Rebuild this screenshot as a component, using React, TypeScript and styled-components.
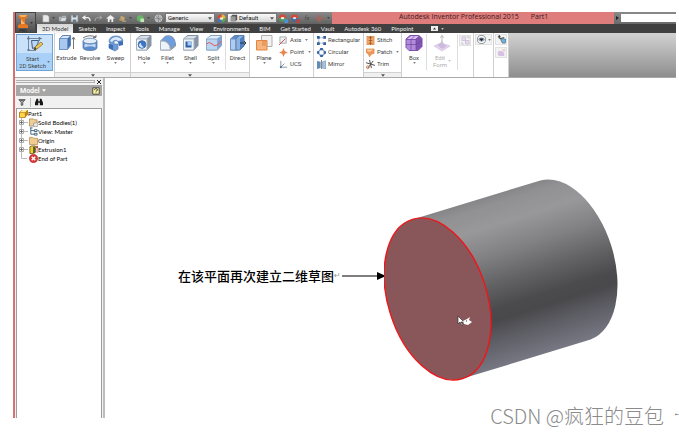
import React from "react";
import styled, { createGlobalStyle, css } from "styled-components";

const Global = createGlobalStyle`
  * { box-sizing: border-box; }
  body { margin: 0; background: #fff; font-family: Roboto, "Noto Sans", sans-serif; }
  button, select, input { font: inherit; color: inherit; border: 0; padding: 0; margin: 0; background: none; }
  svg { display: block; flex: none; }
`;

const Page = styled.div`
  position: relative;
  min-height: 100vh;
  padding: 12px 3px 17px 13px;
`;
const Shell = styled.div`
  display: flex;
  flex-direction: column;
  min-height: calc(100vh - 29px);
  border-left: 2px solid #d97373;
  font-size: 6px;
  line-height: 8px;
  color: #444;
`;
const Header = styled.header`
  display: flex;
  height: 21px;
`;
const AppButton = styled.button`
  width: 21px;
  flex: none;
  display: flex;
  align-items: center;
  justify-content: center;
  gap: 2px;
  background: linear-gradient(#8c8c8c, #4b4b4b);
  border: 1px solid #444;
`;
const HeaderRows = styled.div`
  flex: 1;
  min-width: 0;
`;
const TitleRow = styled.div`
  display: flex;
  height: 12px;
`;
const QuickBar = styled.div`
  width: 296px;
  flex: none;
  display: flex;
  align-items: center;
  padding: 0 1px 0 3px;
  background: linear-gradient(#8a8a8a, #626262);
`;
const QuickButton = styled.button<{ $w?: number }>`
  width: ${(p) => p.$w ?? 12}px;
  height: 11px;
  flex: none;
  display: flex;
  align-items: center;
  justify-content: center;
  gap: 2px;
`;
const Combo = styled.div`
  width: 50px;
  height: 10px;
  flex: none;
  display: flex;
  align-items: center;
  gap: 1px;
  padding: 0 2px;
  background: linear-gradient(#fafafa, #d6d6d6);
  border: 1px solid #777;
`;
const ComboSelect = styled.select`
  appearance: none;
  flex: 1;
  min-width: 0;
  height: 8px;
  line-height: 8px;
  color: #111;
`;
const Title = styled.h1`
  flex: 1;
  margin: 0;
  padding-left: 67px;
  display: flex;
  gap: 12px;
  background: #df7d7d;
  color: #3a1c1c;
  font: 400 7px/9px "Open Sans", sans-serif;
  white-space: nowrap;
`;
const SearchArea = styled.div`
  width: 62px;
  flex: none;
  display: flex;
  align-items: center;
  justify-content: space-between;
  padding-left: 2px;
  background: linear-gradient(#8a8a8a, #6a6a6a);
`;
const SearchInput = styled.input`
  width: 55px;
  height: 8px;
  background: #fff;
`;
const Tabs = styled.nav`
  display: flex;
  height: 9px;
  padding-left: 1px;
  background: #404040;
  font-family: Lato, sans-serif;
`;
const Tab = styled.button<{ $active?: boolean }>`
  height: 9px;
  line-height: 9px;
  padding: 0 5px;
  color: #f0f0f0;
  white-space: nowrap;
  ${(p) =>
    p.$active &&
    css`
      background: linear-gradient(#d4d4d4, #f4f4f4);
      color: #333;
    `}
`;
const TabMenu = styled(Tab)`
  display: flex;
  align-items: center;
  gap: 3px;
  margin-left: 8px;
`;

const Ribbon = styled.div`
  display: flex;
  height: 45px;
  border-bottom: 1px solid #a8a8a8;
  background: linear-gradient(#d2d2d2, #8e8e8e);
`;
const Panel = styled.section<{ $w: number }>`
  width: ${(p) => p.$w}px;
  flex: none;
  display: flex;
  flex-direction: column;
  background: #fff;
  border-right: 1px solid #cfcfcf;
`;
const PanelBody = styled.div<{ $pad?: number }>`
  flex: 1;
  display: flex;
  padding: 1px ${(p) => p.$pad ?? 0}px 0;
`;
const PanelFoot = styled.button`
  height: 5px;
  width: 100%;
  flex: none;
  display: flex;
  align-items: center;
  justify-content: center;
  background: #f0f0f0;
  border-top: 1px solid #d2d2d2;
`;
const StartButton = styled.button`
  width: 37px;
  height: 37px;
  margin-left: 1px;
  display: grid;
  grid-template-rows: 19px 1fr;
  justify-items: center;
  line-height: 7px;
  background: linear-gradient(#c9e2fa 52%, #a9d1f7 52%);
  border: 1px solid #6fa3d6;
`;
const StartLabel = styled.span`
  display: flex;
  align-items: center;
  gap: 1px;
`;
const Tool = styled.button<{ $w: number; $faded?: boolean }>`
  width: ${(p) => p.$w}px;
  flex: none;
  display: flex;
  flex-direction: column;
  align-items: center;
  line-height: 7px;
  opacity: ${(p) => (p.$faded ? 0.45 : 1)};
  white-space: nowrap;
`;
const ToolLabel = styled.span`
  margin: 2px 0 1px;
`;
const Rule = styled.i`
  width: 1px;
  flex: none;
  height: 36px;
  background: #dedede;
`;
const RowList = styled.div<{ $left?: number }>`
  display: flex;
  flex-direction: column;
  padding: 0 0 0 ${(p) => p.$left ?? 3}px;
`;
const RowTool = styled.button`
  height: 12px;
  display: flex;
  align-items: center;
  gap: 2px;
  white-space: nowrap;
`;
const RowText = styled.span`
  margin-right: 2px;
`;
const MiniButton = styled.button<{ $faded?: boolean }>`
  height: 11px;
  min-width: 12px;
  display: flex;
  align-items: center;
  justify-content: center;
  gap: 2px;
  margin: 1px;
  background: #f3f3f3;
  border: 1px solid #e2e2e2;
  svg { opacity: ${(p) => (p.$faded ? 0.4 : 1)}; }
`;

const Work = styled.div`
  flex: 1;
  display: flex;
`;
const Browser = styled.aside`
  width: 90px;
  flex: none;
  display: flex;
  flex-direction: column;
  padding-left: 1px;
  background: #f1f1f1;
  border-right: 2px solid #bdbdbd;
`;
const Grip = styled.div`
  height: 7px;
  display: flex;
  align-items: center;
  gap: 2px;
  padding-right: 2px;
`;
const GripLines = styled.i`
  flex: 1;
  height: 3px;
  border: solid #b0b0b0;
  border-width: 1px 1px 1px 0;
`;
const PlainButton = styled.button`
  display: flex;
  align-items: center;
  gap: 2px;
`;
const BrowserTitle = styled.div`
  height: 11px;
  display: flex;
  align-items: center;
  justify-content: space-between;
  margin-right: 1px;
  padding: 0 2px 0 4px;
  background: #a6a6a6;
  color: #fff;
  font-size: 7px;
  font-weight: 600;
`;
const BrowserTools = styled.div`
  height: 12px;
  display: flex;
  align-items: center;
  gap: 4px;
  padding-left: 2px;
`;
const ToolRule = styled.i`
  width: 1px;
  height: 9px;
  background: #bbb;
`;
const Tree = styled.ul`
  flex: 1;
  list-style: none;
  margin: 0 1px 0 0;
  padding: 0 0 0 2px;
  background: #fff;
  border: solid #9c9c9c;
  border-width: 1px 1px 0 1px;
  color: #000;
  font-family: Lato, sans-serif;
`;
const Node = styled.li`
  height: 9px;
  display: flex;
  align-items: center;
  white-space: nowrap;
`;

const Viewport = styled.main`
  flex: 1;
  min-width: 0;
  display: flex;
  align-items: flex-start;
  padding: 100px 0 0 73px;
  background: #fff;
`;
const Callout = styled.div`
  display: flex;
  align-items: center;
  flex: none;
  margin: 88px -2px 0 0;
  height: 20px;
  color: #000;
  font: 500 13px/20px "Noto Sans CJK SC", sans-serif;
  white-space: nowrap;
`;
const Return = styled.span`
  width: 8px;
  color: #999;
  font: 8px/20px "DejaVu Sans", sans-serif;
`;
const Watermark = styled.div`
  position: absolute;
  right: 15px;
  bottom: 5px;
  color: #8b8b8b;
  font: 300 20px/28px "Noto Sans CJK SC", sans-serif;
  white-space: nowrap;
`;
const PageReturn = styled.span`
  position: absolute;
  right: 0;
  bottom: 15px;
  color: #555;
  font: 5px/12px "DejaVu Sans", sans-serif;
`;

const Caret = ({ color = "#555", size = 3 }: { color?: string; size?: number }) => (
  <svg width={size} height={size - 1} viewBox="0 0 4 3" aria-hidden="true">
    <path d="M0 0.3H4L2 2.8Z" fill={color} />
  </svg>
);

const B = "#3f6fae";
const L = "#a9c8ef";
const G = "#66717f";

const big: Record<string, React.ReactNode> = {
  sketch: (
    <>
      <path d="M2.5 1v15M1 3.5h15M2 15.5h8M13.5 2v4" stroke="#5d7287" strokeWidth=".8" fill="none" />
      <path d="M1.500 2.500h2v2h-2zM12.500 2.500h2v2h-2zM1.500 14h2v2h-2z" fill="#5f7890" />
      <path d="M5.5 5.5h7q-1 7-6 8z" fill="#b9d8f7" stroke="#3f5d82" />
      <path d="M8 15l1-3 6-5 2 2-6 5z" fill="#f0ca55" stroke="#855f21" strokeWidth=".7" />
      <path d="M8 15l1-3 1.6 2z" fill="#403526" />
    </>
  ),
  extrude: (
    <>
      <path d="M1.5 4.5l3-3h8v10l-3 4h-8z" fill={B} stroke="#6384ae" />
      <path d="M1.5 4.5h8v11h-8z" fill={L} stroke="#6f94c4" />
      <path d="M2 4l3-2h7l-2 2z" fill="#d9e9fb" />
      <path d="M15.500 15V4M14 5.500L15.500 3 17 5.500" stroke="#666" fill="none" strokeWidth=".9" />
    </>
  ),
  revolve: (
    <>
      <path d="M2 7v6.500q0 3 7 3t7-3V7z" fill="#5c8bc9" stroke="#557bad" strokeWidth=".8" />
      <path d="M3.500 9.500q5.500 2 11 0v4q-5-2.500-11 0z" fill="#c3daf6" />
      <ellipse cx="9" cy="7" rx="7" ry="2.800" fill="#e2edfa" stroke="#557bad" strokeWidth=".8" />
      <path d="M2 4q6-4 13-1M15 1v2.500h-3" stroke="#666" fill="none" strokeWidth=".9" />
    </>
  ),
  sweep: (
    <>
      <path d="M2 8q0-6 7-6 6 0 7 5l-5 1q-1-2-4-1v3h4v5l-3 2-6-3v-4h2z" fill="#6d9bd7" stroke="#5f86b8" strokeWidth=".8" />
      <path d="M3 7q2-4 7-4 4 1 5 3l-4 1q-3-3-6 1z" fill="#dceafb" />
      <path d="M2 10l4 1v5l-4-2zM11 8l5-1v4l-4 1z" fill="#3c6fb3" />
    </>
  ),
  hole: (
    <>
      <path d="M1.5 5l4-3.5H16v10l-4 4.5H1.5z" fill="#8795a4" stroke="#8896a6" />
      <path d="M1.5 5H12v11H1.5z" fill="#edf3f8" stroke="#a4b0bd" />
      <path d="M2 4.5L6 2h9l-3 2.5z" fill="#d7e0e9" />
      <circle cx="7" cy="10.5" r="3.800" fill="#3976ca" stroke="#4a6ea3" />
      <path d="M4 11a3 3 0 0 0 5 2q-3-1-3-4-2 0-2 2z" fill="#d3e8ff" />
    </>
  ),
  fillet: (
    <>
      <path d="M1.5 7l5-5q9-2 10 8v2l-5 4h-10z" fill="#8b9bac" stroke="#8594a5" />
      <path d="M1.5 7q9-1 10 9h-10z" fill="#edf3f8" stroke="#a4b0bd" />
      <path d="M3 6l4-4q8-1 9.500 8l-4.500 4Q11 7 3 6z" fill="#6f9ee0" />
    </>
  ),
  shell: (
    <>
      <path d="M1.5 5l4-3.5H16v10l-4 4.5H1.5z" fill="#8795a4" stroke="#8290a0" />
      <path d="M1.5 5H12v11H1.5z" fill="#edf3f8" stroke="#a4b0bd" />
      <path d="M3.500 7.500h6v6h-6z" fill="#2e5f9f" />
      <path d="M5.500 7.500h4v4h-4z" fill="#a6caf4" />
      <path d="M2 4.5L6 2h9l-3 2.5z" fill="#d7e0e9" />
    </>
  ),
  split: (
    <>
      <path d="M1.5 5l4-3.5h11v10l-4 4.5h-11z" fill="#7da5d7" stroke="#86a1c0" />
      <path d="M1.5 5h11v11h-11z" fill="#bad4f1" stroke="#8dacc9" />
      <path d="M2 4.5L6 2h10l-4 2.5z" fill="#e4eff9" />
      <path d="M1.500 10q3-3 5.500 0t5.500 1l4-4" stroke="#e35656" fill="none" />
    </>
  ),
  direct: (
    <>
      <path d="M1.5 5l4-3.5H13v10l-4 4.5H1.5z" fill="#5d8bc7" stroke="#5f80a8" />
      <path d="M1.5 5H7v11H1.5z" fill="#afcdf1" stroke="#6e94c3" />
      <path d="M7 5l3.5-3.5H15V12l-4 4H7z" fill="#8db1e0" stroke="#5f80a8" />
      <path d="M11 5l4-3.500V12l-4 4z" fill="#4f7fbd" />
      <path d="M11 9h6M15 7l2 2-2 2" stroke="#26374d" fill="none" />
    </>
  ),
  plane: (
    <>
      <path d="M6.5 1.5H17v11H6.5z" fill="#f2f2f2" stroke="#b0b0b0" />
      <path d="M1.5 6.5H12v9.5H1.5z" fill="#f8b47e" stroke="#e08643" />
      <path d="M7 7h4.500v5H7z" fill="#e89c60" />
    </>
  ),
  box: (
    <>
      <path d="M1 5l4-3.500h9l3 3v8l-4 4H4l-3-3z" fill="#8055b2" stroke="#7d52ad" strokeLinejoin="round" />
      <path d="M1.500 6h9.500v10H4l-2.500-2z" fill="#b48bdc" />
      <path d="M2 5l4-3h8l-3 3z" fill="#d9bdf2" />
      <path d="M1 10.500h10l6-4M6 16V5.500l4-4M11 16V5l4-3" stroke="#6d4699" fill="none" strokeWidth=".7" />
    </>
  ),
  form: (
    <>
      <path d="M1 12l7-3 9 3-8 5z" fill="#c5a1df" stroke="#9c76bd" strokeWidth=".7" />
      <path d="M4 11q4-1 5-5 1 5 5 6l-5 3z" fill="#8f6ab3" />
      <path d="M9 8V2M7.500 4L9 1l1.500 3" stroke="#777" fill="none" />
    </>
  ),
};

const small: Record<string, React.ReactNode> = {
  axis: <><path d="M1 1h7v7H1z" fill="#edf0f3" stroke="#8c959d" strokeWidth=".8" /><path d="M0 10l7-7" stroke="#d0452e" /></>,
  point: <path d="M5 0l1.5 3.5L10 5 6.500 6.500 5 10 3.500 6.500 0 5l3.500-1.500z" fill="#e9854a" />,
  ucs: <><path d="M2 1v7h7M2 8l4-4" fill="none" stroke={G} strokeWidth=".8" /><path d="M1 7h2v2H1z" fill="#3976a8" /></>,
  rect: <><path d="M2 2h7M2 2v6h7" stroke="#7590b2" fill="none" strokeDasharray="2 1" /><path d="M0 0h3v3H0zM7 0h3v3H7zM0 7h3v3H0zM7 7h3v3H7z" fill="#315f9d" /></>,
  circ: <><circle cx="5" cy="5" r="3.300" stroke="#7c9aca" strokeWidth="1.300" fill="none" /><path d="M3.500 0h3v2.500h-3zM3.500 7.500h3V10h-3zM0 3.500h2.500v3H0zM7.500 3.500H10v3H7.500z" fill="#355f9e" /></>,
  mirror: <><path d="M0 1l4 1v7L0 10z" fill="#648bb8" /><path d="M10 1L6 2v7l4 1z" fill="#a5c2df" stroke="#6b8bad" strokeWidth=".6" /><path d="M5 0v10" stroke="#444" strokeWidth=".7" /></>,
  stitch: <><path d="M1 0h8v10H1z" fill="#f3a868" stroke="#cd7b40" strokeWidth=".6" /><path d="M5 0v10M3 2h4M3 5h4M3 8h4" stroke="#8f4e25" strokeWidth=".8" /></>,
  patch: <><path d="M0 1h9v5q-4 0-5 4Q3 6 0 5z" fill="#ef9658" stroke="#d3803f" strokeWidth=".6" /><path d="M1 2h7L5 4H2z" fill="#ffd4ac" /></>,
  trim: <><path d="M0 3l10 3M4 0l2 9M8 1L2 9" stroke="#4d4d4d" strokeWidth="1.100" /><circle cx="2" cy="8" r="1.500" stroke="#cc7440" fill="none" /></>,
  convert: <><path d="M1 1h4v4H1zM5 5h4v4H5z" fill="#d7b6e9" stroke="#9b79b1" /><path d="M6 1h3v2M1 7v2h2" stroke="#777" fill="none" /></>,
  eye: <><circle cx="5" cy="5" r="4.500" fill="#fff" stroke="#555" strokeWidth=".7" /><path d="M1 5q4-5 8 0-4 5-8 0z" fill="#9aa9b5" /><path d="M2.500 4h5L5 7z" fill="#223" /></>,
  inspect: <><path d="M1 2h3M2.500 0v4M3 4l5-1" stroke="#222" /><path d="M4 5l3-1 3 1-1 4H6z" fill="#75b3d5" stroke="#335d7b" strokeWidth=".7" /></>,
  form2: <><path d="M1 4l3-1 4 2v4H3L1 8z" fill="#ab7acc" /><path d="M6 1l3 3M9 1L6 4" stroke="#e26b5e" /></>,
  newdoc: <path d="M2 1h5l2 2v6H2z" fill="#e9e9e9" stroke="#999" strokeWidth=".6" />,
  open: <><path d="M1 3h3l1-1h4v6H1z" fill="#b0b5b9" /><path d="M2 8l2-4h6L8 8z" fill="#dde1e4" stroke="#6a7075" strokeWidth=".5" /></>,
  save: <><path d="M1 1h8v8H1z" fill="#dfe6ed" stroke="#6e7882" /><path d="M3 1h4v3H3zM3 6h4v3H3z" fill="#6c7781" /></>,
  undo: <path d="M4 2L1 4l3 2M1 4h5q3 0 3 4" fill="none" stroke="#efefef" strokeWidth="1.300" />,
  redo: <path d="M6 2l3 2-3 2M9 4H4Q1 4 1 8" fill="none" stroke="#aaa" />,
  home: <path d="M0 5l5-4 5 4H8v4H6V6H4v3H2V5z" fill="#efefef" />,
  team: <><path d="M1 7l3-5 4 2-2 4z" fill="#b99b68" /><path d="M5 8h4M3 3l4 3" stroke="#d2bb85" /></>,
  update: <><path d="M1 3l3-2 4 1v5L5 9 1 7z" fill="#66b566" /><path d="M5 5h4v4H5z" fill="#c3e7b4" /></>,
  globe: <><circle cx="5" cy="5" r="4" fill="#b4b8ba" stroke="#ddd" strokeWidth=".6" /><path d="M1 5h8M5 1v8M2 2l6 6" stroke="#777" strokeWidth=".6" /></>,
  wheel: <><path d="M5 5V.5A4.500 4.500 0 0 1 9.500 5z" fill="#e8b738" /><path d="M5 5h4.500A4.500 4.500 0 0 1 5 9.500z" fill="#57a94d" /><path d="M5 5v4.500A4.500 4.500 0 0 1 .5 5z" fill="#4872cc" /><path d="M5 5H.5A4.500 4.500 0 0 1 5 .5z" fill="#d7473a" /><ellipse cx="5" cy="5" rx="2" ry="1.500" fill="#f2edcc" /></>,
  adjust: <><path d="M0 4.500a4 4 0 0 1 8 0z" fill="#d7473a" /><path d="M0 4.500a4 4 0 0 0 8 0z" fill="#4f9c58" /><ellipse cx="4" cy="4.500" rx="2" ry="1.300" fill="#eee" /><path d="M6 6h4v4H6z" fill="#4b93d6" /></>,
  clear: <><path d="M0 4.500a4 4 0 0 1 8 0z" fill="#d7473a" /><path d="M0 4.500a4 4 0 0 0 8 0z" fill="#46699f" /><ellipse cx="4" cy="4.500" rx="2" ry="1.300" fill="#ddd" /><path d="M6 6l4 4M10 6l-4 4" stroke="#d93b33" strokeWidth="1.300" /></>,
  plus: <path d="M5 1v8M1 5h8" stroke="#a86458" strokeWidth="2" />,
  cube: <><path d="M1 3l2-2h6v6L7 9H1z" fill="#555" /><path d="M1 3h6v6H1z" fill="#999" /></>,
  part: <><path d="M0 4l3-3h7v5L7 9.500H0z" fill="#c48715" /><path d="M.5 4H7v5.500H.5z" fill="#ffd64c" stroke="#94620c" strokeWidth=".6" /><path d="M1 3.500L4 1h5L7 3.500z" fill="#fff09e" /></>,
  bodies: <><path d="M.5 1H5l1 1h3v7H.5z" fill="#f0cf95" stroke="#92713b" strokeWidth=".7" /><path d="M5 6l3-1 2 1v3L7 10 5 9z" fill="#e2e7ea" stroke="#777" strokeWidth=".6" /></>,
  view: <path d="M2 1v7h4M2 4h4M1 1h3M6 3h3v2H6zM6 7h3v2H6z" stroke="#345d7e" fill="none" />,
  folder: <path d="M.5 1.500H4l1 1h4.500v7H.5z" fill="#f1cc91" stroke="#ad7c3d" strokeWidth=".7" />,
  extr: <><path d="M1 2l2-1h4v7L5 9.500H1z" fill="#f3d02f" stroke="#56420b" strokeWidth=".8" /><path d="M4.500 2H7v7H4.500z" fill="#555f29" /><path d="M9 9V1M8 3l1-2 1 2" stroke="#c33" strokeWidth=".8" /></>,
  end: <><circle cx="5" cy="5" r="4.700" fill="#d93636" stroke="#a42020" strokeWidth=".5" /><path d="M3 3l4 4M7 3L3 7" stroke="#fff" strokeWidth="1.500" /></>,
  filter: <path d="M1 2h8L6 5.500V9H4V5.500zM3 3h4" fill="#aaa" stroke="#3d3d3d" strokeWidth=".9" />,
  find: <path d="M2 1h2v3h2V1h2l2 5v3H6V6H4v3H0V6z" fill="#171717" />,
  help: <><path d="M1 1h8v8H1z" fill="#fff9a4" stroke="#333" /><path d="M3 4q0-2 2-2t2 2L5 5v1M5 7v1" stroke="#333" fill="none" /></>,
};

const Big = ({ n }: { n: string }) => (
  <svg width="18" height="18" viewBox="0 0 18 18" aria-hidden="true">{big[n]}</svg>
);
const Small = ({ n, s = 9 }: { n: string; s?: number }) => (
  <svg width={s} height={s} viewBox="0 0 10 10" aria-hidden="true">{small[n]}</svg>
);

const BigTool = ({ n, w, label, menu }: { n: string; w: number; label: string; menu?: boolean }) => (
  <Tool $w={w}>
    <Big n={n} />
    <ToolLabel>{label}</ToolLabel>
    {menu && <Caret />}
  </Tool>
);

const ListTool = ({ n, label, menu }: { n: string; label: string; menu?: boolean }) => (
  <RowTool>
    <Small n={n} />
    <RowText>{label}</RowText>
    {menu && <Caret />}
  </RowTool>
);

const tabs = ["3D Model", "Sketch", "Inspect", "Tools", "Manage", "View", "Environments", "BIM", "Get Started", "Vault", "Autodesk 360", "Pinpoint"];

const nodes: [string, string][] = [
  ["bodies", "Solid Bodies(1)"],
  ["view", "View: Master"],
  ["folder", "Origin"],
  ["extr", "Extrusion1"],
  ["end", "End of Part"],
];

const Branch = ({ leaf }: { leaf: boolean }) => (
  <svg width="10" height="9" viewBox="0 0 10 9" aria-hidden="true">
    <path d={leaf ? "M2.500 0v4.500H8" : "M2.500 0v9M5 4.500h4"} stroke="#bbb" fill="none" />
    {!leaf && (
      <>
        <path d="M.5 2.500h4v4h-4z" fill="#fff" stroke="#aaa" />
        <path d="M1 4.500h3M2.500 3v3" stroke="#444" strokeWidth=".7" />
      </>
    )}
  </svg>
);

const Cylinder = () => (
  <svg width="236" height="205" viewBox="0 0 236 205" role="img" aria-label="Cylinder">
    <defs>
      <linearGradient id="side" gradientUnits="userSpaceOnUse" x1="28.4" y1="41.4" x2="78.6" y2="200.6">
        <stop offset="0" stopColor="#858588" />
        <stop offset=".06" stopColor="#919194" />
        <stop offset=".18" stopColor="#98989b" />
        <stop offset=".34" stopColor="#828285" />
        <stop offset=".52" stopColor="#626265" />
        <stop offset=".66" stopColor="#4b4b4e" />
        <stop offset=".73" stopColor="#49494c" />
        <stop offset=".86" stopColor="#606068" />
        <stop offset="1" stopColor="#777783" />
      </linearGradient>
    </defs>
    <path d="M28.4 41.4L156.400 2.400A49.400 83.500 -17.500 0 1 206.600 161.600L78.600 200.600Z" fill="url(#side)" />
    <ellipse cx="53.500" cy="121" rx="49.400" ry="83.500" transform="rotate(-17.500 53.500 121)" fill="#89575a" stroke="#f01519" strokeWidth="1.400" />
    <path d="M74 138v8l2-2 2 4 1-1-2-3h3z" fill="#fff" stroke="#333" strokeWidth=".7" />
    <path d="M79 143l4-2 3-2-1 3 3 2-4 3-4-1z" fill="#fff" />
    <path d="M82 143h1" stroke="#333" />
  </svg>
);

export default function App() {
  return (
    <Page>
      <Global />
      <Shell>
        <Header>
          <AppButton aria-label="Application menu">
            <svg width="10" height="18" viewBox="0 0 10 18">
              <path d="M1 1h8v3L7 5v5l3 1v3H0v-3l3-1V5L1 4z" fill="#e87722" />
              <path d="M1 1h8L7 3H3zM3 5l4 5H3z" fill="#ffb15e" />
              <text x="5" y="17.500" fontSize="4" textAnchor="middle" fill="#222">PRO</text>
            </svg>
            <Caret color="#222" />
          </AppButton>
          <HeaderRows>
            <TitleRow>
              <QuickBar>
                <QuickButton $w={17} aria-label="New"><Small n="newdoc" /><Caret color="#333" /></QuickButton>
                <QuickButton aria-label="Open"><Small n="open" /></QuickButton>
                <QuickButton aria-label="Save"><Small n="save" /></QuickButton>
                <QuickButton aria-label="Undo"><Small n="undo" /></QuickButton>
                <QuickButton aria-label="Redo"><Small n="redo" /></QuickButton>
                <QuickButton aria-label="Home"><Small n="home" /></QuickButton>
                <QuickButton $w={18} aria-label="Team"><Small n="team" /><Caret color="#333" /></QuickButton>
                <QuickButton $w={18} aria-label="Update"><Small n="update" /><Caret color="#333" /></QuickButton>
                <QuickButton $w={13} aria-label="Material browser"><Small n="globe" /></QuickButton>
                <Combo>
                  <ComboSelect aria-label="Material"><option>Generic</option></ComboSelect>
                  <Caret size={4} />
                </Combo>
                <QuickButton aria-label="Appearance browser"><Small n="wheel" /></QuickButton>
                <Combo>
                  <Small n="cube" s={8} />
                  <ComboSelect aria-label="Appearance"><option>Default</option></ComboSelect>
                  <Caret size={4} />
                </Combo>
                <QuickButton aria-label="Adjust"><Small n="adjust" /></QuickButton>
                <QuickButton aria-label="Clear"><Small n="clear" /></QuickButton>
                <QuickButton aria-label="Parameters"><i>fx</i></QuickButton>
                <QuickButton aria-label="Add"><Small n="plus" /></QuickButton>
                <QuickButton $w={7} aria-label="Customize"><Caret color="#333" /></QuickButton>
              </QuickBar>
              <Title><span>Autodesk Inventor Professional 2015</span><span>Part1</span></Title>
              <SearchArea>
                <svg width="3" height="4" viewBox="0 0 3 4"><path d="M0 0l3 2-3 2z" fill="#222" /></svg>
                <SearchInput aria-label="Search" />
              </SearchArea>
            </TitleRow>
            <Tabs>
              {tabs.map((t, i) => <Tab key={t} $active={i === 0}>{t}</Tab>)}
              <TabMenu aria-label="Ribbon display">
                <svg width="7" height="5" viewBox="0 0 7 5"><path d="M0 0h7v5H0z" fill="#eee" /><path d="M2 3.500h3L3.500 1.500z" fill="#333" /></svg>
                <Caret color="#eee" />
              </TabMenu>
            </Tabs>
          </HeaderRows>
        </Header>

        <Ribbon>
          <Panel $w={40}>
            <PanelBody>
              <StartButton>
                <Big n="sketch" />
                <StartLabel><span>Start<br />2D Sketch</span><Caret /></StartLabel>
              </StartButton>
            </PanelBody>
          </Panel>
          <Panel $w={76}>
            <PanelBody>
              <BigTool n="extrude" w={23} label="Extrude" />
              <BigTool n="revolve" w={24} label="Revolve" />
              <BigTool n="sweep" w={27} label="Sweep" menu />
            </PanelBody>
            <PanelFoot aria-label="Create"><Caret size={4} /></PanelFoot>
          </Panel>
          <Panel $w={119}>
            <PanelBody $pad={1}>
              <BigTool n="hole" w={24} label="Hole" menu />
              <BigTool n="fillet" w={23} label="Fillet" menu />
              <BigTool n="shell" w={23} label="Shell" menu />
              <BigTool n="split" w={23} label="Split" menu />
              <Rule />
              <BigTool n="direct" w={23} label="Direct" />
            </PanelBody>
            <PanelFoot aria-label="Modify"><Caret size={4} /></PanelFoot>
          </Panel>
          <Panel $w={64}>
            <PanelBody $pad={1}>
              <BigTool n="plane" w={26} label="Plane" menu />
              <RowList $left={2}>
                <ListTool n="axis" label="Axis" menu />
                <ListTool n="point" label="Point" menu />
                <ListTool n="ucs" label="UCS" />
              </RowList>
            </PanelBody>
          </Panel>
          <Panel $w={50}>
            <PanelBody>
              <RowList>
                <ListTool n="rect" label="Rectangular" />
                <ListTool n="circ" label="Circular" />
                <ListTool n="mirror" label="Mirror" />
              </RowList>
            </PanelBody>
          </Panel>
          <Panel $w={38}>
            <PanelBody>
              <RowList $left={2}>
                <ListTool n="stitch" label="Stitch" />
                <ListTool n="patch" label="Patch" menu />
                <ListTool n="trim" label="Trim" />
              </RowList>
            </PanelBody>
            <PanelFoot aria-label="Surface"><Caret size={4} /></PanelFoot>
          </Panel>
          <Panel $w={72}>
            <PanelBody>
              <BigTool n="box" w={24} label="Box" menu />
              <Rule />
              <Tool $w={30} $faded>
                <Big n="form" />
                <StartLabel><ToolLabel>Edit<br />Form</ToolLabel><Caret /></StartLabel>
              </Tool>
              <Rule />
              <div><MiniButton $faded aria-label="Convert"><Small n="convert" /></MiniButton></div>
            </PanelBody>
          </Panel>
          <Panel $w={20}>
            <MiniButton aria-label="Visibility"><Small n="eye" /><Caret /></MiniButton>
          </Panel>
          <Panel $w={15}>
            <MiniButton aria-label="Measure"><Small n="inspect" /></MiniButton>
            <MiniButton $faded aria-label="Shape"><Small n="form2" /></MiniButton>
          </Panel>
        </Ribbon>

        <Work>
          <Browser>
            <Grip>
              <GripLines />
              <PlainButton aria-label="Close">
                <svg width="4" height="4" viewBox="0 0 4 4"><path d="M0 0l4 4M4 0L0 4" stroke="#222" /></svg>
              </PlainButton>
            </Grip>
            <BrowserTitle>
              <PlainButton>Model <Caret color="#fff" size={4} /></PlainButton>
              <PlainButton aria-label="Help"><Small n="help" s={8} /></PlainButton>
            </BrowserTitle>
            <BrowserTools>
              <PlainButton aria-label="Filter"><Small n="filter" s={8} /></PlainButton>
              <ToolRule />
              <PlainButton aria-label="Find"><Small n="find" s={8} /></PlainButton>
            </BrowserTools>
            <Tree>
              <Node><Small n="part" />Part1</Node>
              {nodes.map(([n, label]) => (
                <Node key={label}>
                  <Branch leaf={n === "end"} />
                  <Small n={n} />
                  {label}
                </Node>
              ))}
            </Tree>
          </Browser>
          <Viewport>
            <Callout>
              在该平面再次建立二维草图<Return>↵</Return>
              <svg width="44" height="8" viewBox="0 0 44 8"><path d="M0 3.500h36v1H0zM35 0l9 4-9 4z" fill="#000" /></svg>
            </Callout>
            <Cylinder />
          </Viewport>
        </Work>
      </Shell>
      <Watermark>CSDN @疯狂的豆包</Watermark>
      <PageReturn>←</PageReturn>
    </Page>
  );
}
